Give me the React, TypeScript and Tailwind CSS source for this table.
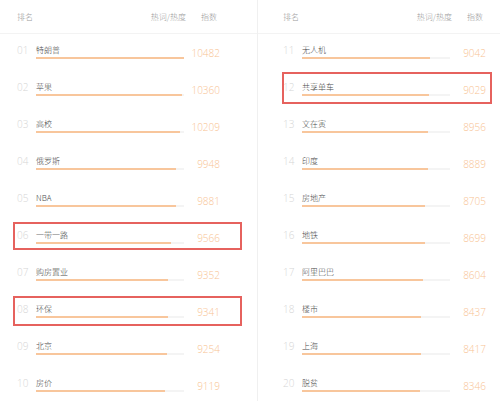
type Item = { rank: string; word: string; value: number; box?: string };

const leftItems: Item[] = [
  { rank: '01', word: '特朗普', value: 10482 },
  { rank: '02', word: '苹果', value: 10360 },
  { rank: '03', word: '高校', value: 10209 },
  { rank: '04', word: '俄罗斯', value: 9948 },
  { rank: '05', word: 'NBA', value: 9881 },
  { rank: '06', word: '一带一路', value: 9566, box: 'left-[-4px] top-[3px] h-[28px] w-[229px]' },
  { rank: '07', word: '购房置业', value: 9352 },
  { rank: '08', word: '环保', value: 9341, box: 'left-[-4px] top-[3px] h-[30px] w-[229px]' },
  { rank: '09', word: '北京', value: 9254 },
  { rank: '10', word: '房价', value: 9119 },
];

const rightItems: Item[] = [
  { rank: '11', word: '无人机', value: 9042 },
  { rank: '12', word: '共享单车', value: 9029, box: 'left-[-1px] top-[1px] h-[32px] w-[210px]' },
  { rank: '13', word: '文在寅', value: 8956 },
  { rank: '14', word: '印度', value: 8889 },
  { rank: '15', word: '房地产', value: 8705 },
  { rank: '16', word: '地铁', value: 8699 },
  { rank: '17', word: '阿里巴巴', value: 8604 },
  { rank: '18', word: '楼市', value: 8437 },
  { rank: '19', word: '上海', value: 8417 },
  { rank: '20', word: '脱贫', value: 8346 },
];

const MAX = 10482;
const cjk = "font-['Noto_Sans_CJK_SC','Noto_Sans',sans-serif]";
const num = "font-['Open_Sans','Noto_Sans',sans-serif]";

function Row({ item }: { item: Item }) {
  return (
    <div className="relative flex h-[37px]">
      <span className={`w-[19px] pt-[10px] text-[10px] leading-[12px] font-light text-[#d6d6d6] ${num}`}>
        {item.rank}
      </span>
      <div className="w-[148px] pt-[10px]">
        <div className={`text-[8px] leading-[12px] font-light text-[#4a4a4a] ${cjk}`}>{item.word}</div>
        <div className="mt-[1px] h-[2px] bg-[#f4f4f4]">
          <div className="h-full bg-[#f8c69c]" style={{ width: `${(item.value / MAX) * 100}%` }} />
        </div>
      </div>
      <span className={`w-[36px] pt-[13px] text-right text-[10px] leading-[12px] font-light text-[#f8c393] ${num}`}>
        {item.value}
      </span>
      {item.box && <div className={`absolute border-2 border-[#e6625e] ${item.box}`} />}
    </div>
  );
}

function Panel({ items, pad, divider }: { items: Item[]; pad: string; divider?: boolean }) {
  return (
    <div className={`w-[258px] shrink-0 ${divider ? 'border-r border-[#f0f0f0]' : 'flex-1'}`}>
      <div className={`flex h-[34px] items-center border-b border-[#f3f3f3] ${pad}`}>
        <div className={`flex w-[203px] text-[8px] font-light text-[#9a9a9a] ${cjk}`}>
          <span className="flex-1">排名</span>
          <span>热词/热度</span>
          <span className="ml-[15px] mr-[3px]">指数</span>
        </div>
      </div>
      <div className={pad}>
        {items.map((it) => (
          <Row key={it.rank} item={it} />
        ))}
      </div>
    </div>
  );
}

export default function App() {
  return (
    <div className="flex h-[401px] w-[500px] overflow-hidden bg-white">
      <Panel items={leftItems} pad="pl-[17px]" divider />
      <Panel items={rightItems} pad="pl-[25px]" />
    </div>
  );
}
